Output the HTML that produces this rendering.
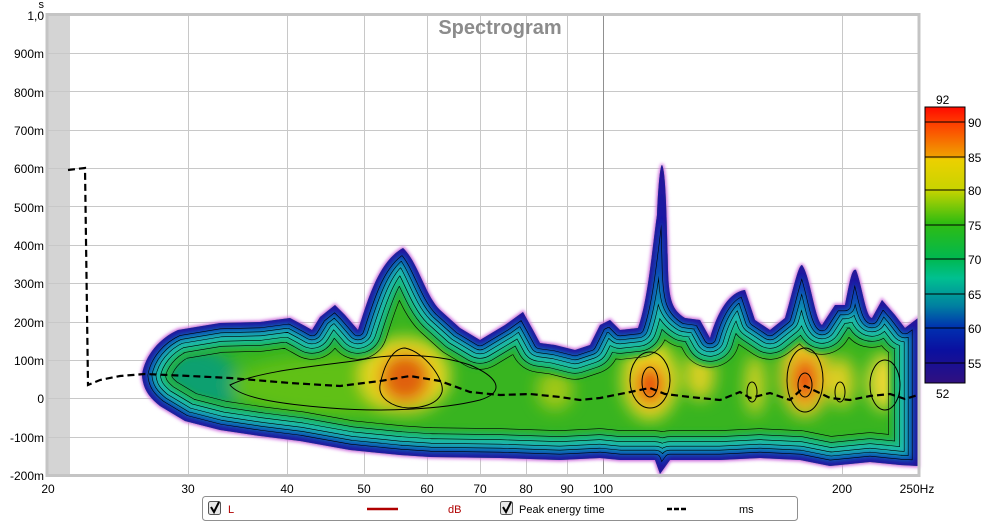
<!DOCTYPE html>
<html><head><meta charset="utf-8"><style>
body{margin:0;background:#fff;width:1000px;height:523px;overflow:hidden;font-family:"Liberation Sans",sans-serif}
</style></head><body>
<svg width="1000" height="523" viewBox="0 0 1000 523" xmlns="http://www.w3.org/2000/svg" font-family="Liberation Sans, sans-serif">
<defs>
<path id="blob" d="M142,375 C145,355 160,338 178,330 L220,323 L260,322 L290,318 L305,326 L312,330 L320,317 L335,305 L345,315 L358,330 C368,300 378,262 403,248 C418,262 425,295 440,310 L460,328 L480,340 L505,325 L523,312 L533,330 L540,343 L555,345 L575,350 L590,345 L600,325 L610,320 L620,330 L638,328 C648,300 652,250 657,215 C658,190 660,165 662,165 C666,170 667,230 668,270 C669,300 672,310 685,318 L700,320 L710,338 C718,310 730,292 745,290 L755,320 L770,330 L785,318 C792,295 798,265 802,265 C810,275 815,320 822,325 L835,305 L845,305 C850,280 852,268 856,270 C862,285 866,318 872,318 L882,300 L895,315 L905,328 L918,318 L918,466 L900,465 L870,462 L830,466 L800,460 L760,458 L720,460 L670,460 L660,474 L655,460 L620,460 L600,458 L560,460 L500,458 L430,457 L400,455 L350,450 L300,441 L260,436 L220,430 L185,421 L160,406 C150,398 143,390 142,375 Z"/>
<clipPath id="bc"><use href="#blob"/></clipPath>
<filter id="bl" x="-50%" y="-50%" width="200%" height="200%"><feGaussianBlur stdDeviation="8"/></filter>
<filter id="bb" x="-10%" y="-10%" width="120%" height="120%"><feGaussianBlur stdDeviation="3"/></filter>
<filter id="bl2" x="-50%" y="-50%" width="200%" height="200%"><feGaussianBlur stdDeviation="1.5"/></filter>
<mask id="cm" maskUnits="userSpaceOnUse" x="0" y="0" width="1000" height="523">
<g fill="none" stroke-linejoin="round">
<use href="#blob" stroke="#fff" stroke-width="59.2"/><use href="#blob" stroke="#000" stroke-width="58"/>
<use href="#blob" stroke="#fff" stroke-width="47.2"/><use href="#blob" stroke="#000" stroke-width="46"/>
<use href="#blob" stroke="#fff" stroke-width="37.2"/><use href="#blob" stroke="#000" stroke-width="36"/>
<use href="#blob" stroke="#fff" stroke-width="28.2"/><use href="#blob" stroke="#000" stroke-width="27"/>
<use href="#blob" stroke="#fff" stroke-width="20.2"/><use href="#blob" stroke="#000" stroke-width="19"/>
<use href="#blob" stroke="#fff" stroke-width="12.2"/><use href="#blob" stroke="#000" stroke-width="11"/>
</g>
</mask>
<linearGradient id="cb" x1="0" y1="0" x2="0" y2="1">
<stop offset="0" stop-color="#ff0a00"/><stop offset="0.055" stop-color="#ff3a00"/>
<stop offset="0.18" stop-color="#f0a000"/><stop offset="0.19" stop-color="#ecd000"/>
<stop offset="0.30" stop-color="#c8d400"/><stop offset="0.42" stop-color="#30bc10"/>
<stop offset="0.55" stop-color="#00b850"/><stop offset="0.62" stop-color="#00c090"/>
<stop offset="0.72" stop-color="#0080a0"/><stop offset="0.80" stop-color="#0030b0"/>
<stop offset="0.88" stop-color="#0a10a0"/><stop offset="1" stop-color="#301080"/>
</linearGradient>
</defs>
<rect x="48" y="16" width="22" height="459" fill="#d4d4d4"/>
<g stroke="#c8c8c8" stroke-width="1">
<line x1="48" x2="918" y1="53.5" y2="53.5"/><line x1="48" x2="918" y1="91.5" y2="91.5"/><line x1="48" x2="918" y1="130.5" y2="130.5"/><line x1="48" x2="918" y1="168.5" y2="168.5"/><line x1="48" x2="918" y1="206.5" y2="206.5"/><line x1="48" x2="918" y1="245.5" y2="245.5"/><line x1="48" x2="918" y1="283.5" y2="283.5"/><line x1="48" x2="918" y1="322.5" y2="322.5"/><line x1="48" x2="918" y1="360.5" y2="360.5"/><line x1="48" x2="918" y1="398.5" y2="398.5"/><line x1="48" x2="918" y1="437.5" y2="437.5"/>
<line x1="188.5" x2="188.5" y1="16" y2="475"/><line x1="287.5" x2="287.5" y1="16" y2="475"/><line x1="364.5" x2="364.5" y1="16" y2="475"/><line x1="427.5" x2="427.5" y1="16" y2="475"/><line x1="480.5" x2="480.5" y1="16" y2="475"/><line x1="526.5" x2="526.5" y1="16" y2="475"/><line x1="567.5" x2="567.5" y1="16" y2="475"/><line x1="842.5" x2="842.5" y1="16" y2="475"/>
</g>
<line x1="603.5" x2="603.5" y1="16" y2="475" stroke="#909090"/>
<use href="#blob" fill="#9030b0" stroke="#d070e0" stroke-width="3" filter="url(#bl2)"/>
<g clip-path="url(#bc)">
<rect x="130" y="150" width="800" height="330" fill="#38b420"/>
<g filter="url(#bl)">
<ellipse cx="190" cy="385" rx="50" ry="40" fill="#10a070"/>
<ellipse cx="340" cy="385" rx="110" ry="30" fill="#60c018"/>
<ellipse cx="405" cy="375" rx="45" ry="38" fill="#e8d820"/>
<ellipse cx="405" cy="378" rx="25" ry="25" fill="#e06010"/>
<ellipse cx="650" cy="380" rx="28" ry="40" fill="#e8d820"/>
<ellipse cx="650" cy="385" rx="14" ry="20" fill="#e84010"/>
<ellipse cx="700" cy="375" rx="15" ry="25" fill="#d8d020"/>
<ellipse cx="755" cy="385" rx="10" ry="30" fill="#d0d020"/>
<ellipse cx="805" cy="375" rx="25" ry="42" fill="#e8c820"/>
<ellipse cx="805" cy="380" rx="12" ry="22" fill="#e83010"/>
<ellipse cx="842" cy="382" rx="12" ry="25" fill="#e0d020"/>
<ellipse cx="885" cy="382" rx="18" ry="28" fill="#e8d830"/>
<ellipse cx="555" cy="390" rx="18" ry="20" fill="#a0c818"/>
</g>
<g fill="none" stroke-linejoin="round" filter="url(#bb)">
<use href="#blob" stroke="#28b038" stroke-width="57"/>
<use href="#blob" stroke="#18b880" stroke-width="45"/>
<use href="#blob" stroke="#20c0b0" stroke-width="35"/>
<use href="#blob" stroke="#1090b0" stroke-width="26"/>
<use href="#blob" stroke="#0850b8" stroke-width="18"/>
<use href="#blob" stroke="#0c18a8" stroke-width="10"/>
<use href="#blob" stroke="#301090" stroke-width="3"/>
</g>
<rect x="0" y="0" width="1000" height="523" fill="#000" mask="url(#cm)"/>
<g fill="none" stroke="#000" stroke-width="1">
<path d="M230,385 C260,370 330,365 360,360 C400,352 440,355 470,365 C500,378 505,392 480,400 C440,410 380,412 330,408 C280,404 240,398 230,385Z"/>
<path d="M380,385 C385,360 395,348 405,348 C425,352 445,380 442,392 C438,405 420,408 408,408 C392,407 378,398 380,385Z"/>
<ellipse cx="650" cy="380" rx="20" ry="28"/>
<ellipse cx="650" cy="382" rx="8" ry="15"/>
<ellipse cx="805" cy="380" rx="18" ry="32"/>
<ellipse cx="805" cy="385" rx="7" ry="12"/>
<ellipse cx="840" cy="392" rx="5" ry="10"/>
<ellipse cx="752" cy="392" rx="5" ry="10"/>
<ellipse cx="885" cy="385" rx="15" ry="25"/>
</g>
</g>
<path d="M68,170 L85,168 L88,385 L100,380 L120,376 L145,374 L190,376 L230,378 L290,383 L340,386 L380,381 L410,376 L440,381 L470,392 L500,395 L530,394 L560,397 L580,400 L600,398 L630,392 L650,388 L665,394 L690,397 L720,400 L740,392 L750,398 L770,393 L790,400 L805,386 L830,398 L850,400 L870,396 L890,394 L905,399 L918,395" fill="none" stroke="#000" stroke-width="2.2" stroke-dasharray="7,4"/>
<rect x="47" y="14.5" width="872" height="461" fill="none" stroke="#c4c4c4" stroke-width="3"/>
<text x="500" y="34" text-anchor="middle" font-size="20" font-weight="bold" fill="#8c8c8c">Spectrogram</text>
<g font-size="12" fill="#000" text-anchor="end">
<text x="44" y="8" font-size="11">s</text>
<text x="44" y="20">1,0</text><text x="44" y="58">900m</text><text x="44" y="97">800m</text><text x="44" y="135">700m</text><text x="44" y="173">600m</text><text x="44" y="212">500m</text><text x="44" y="250">400m</text><text x="44" y="288">300m</text><text x="44" y="327">200m</text><text x="44" y="365">100m</text><text x="44" y="403">0</text><text x="44" y="442">-100m</text><text x="44" y="480">-200m</text>
</g>
<g font-size="12" fill="#000" text-anchor="middle">
<text x="48" y="493">20</text><text x="188" y="493">30</text><text x="287" y="493">40</text><text x="364" y="493">50</text><text x="427" y="493">60</text><text x="480" y="493">70</text><text x="526" y="493">80</text><text x="567" y="493">90</text><text x="603" y="493">100</text><text x="842" y="493">200</text><text x="917" y="493">250Hz</text>
</g>
<rect x="925" y="107" width="40" height="276" fill="url(#cb)" stroke="#000" stroke-width="1"/>
<g stroke="#000" stroke-width="1">
<line x1="925" x2="965" y1="122" y2="122"/><line x1="925" x2="965" y1="157" y2="157"/><line x1="925" x2="965" y1="190" y2="190"/><line x1="925" x2="965" y1="225" y2="225"/><line x1="925" x2="965" y1="259" y2="259"/><line x1="925" x2="965" y1="294" y2="294"/><line x1="925" x2="965" y1="328" y2="328"/><line x1="925" x2="965" y1="363" y2="363"/>
</g>
<g font-size="12" fill="#000">
<text x="936" y="104">92</text><text x="936" y="398">52</text>
<text x="968" y="127">90</text><text x="968" y="162">85</text><text x="968" y="195">80</text><text x="968" y="230">75</text><text x="968" y="264">70</text><text x="968" y="299">65</text><text x="968" y="333">60</text><text x="968" y="368">55</text>
</g>
<rect x="202.5" y="496.5" width="595" height="24" rx="3" fill="#fff" stroke="#909090"/>
<rect x="208.5" y="501.5" width="12" height="13" rx="2" fill="#e8e8e8" stroke="#555"/>
<path d="M211,507 L214,512 L219,502" fill="none" stroke="#000" stroke-width="2"/>
<text x="228" y="513" font-size="11" fill="#b00000">L</text>
<line x1="367" x2="398" y1="509" y2="509" stroke="#b00000" stroke-width="2.5"/>
<text x="448" y="513" font-size="11" fill="#b00000">dB</text>
<rect x="500.5" y="501.5" width="12" height="13" rx="2" fill="#e8e8e8" stroke="#555"/>
<path d="M503,507 L506,512 L511,502" fill="none" stroke="#000" stroke-width="2"/>
<text x="519" y="513" font-size="11" fill="#000">Peak energy time</text>
<line x1="667" x2="686" y1="509" y2="509" stroke="#000" stroke-width="2.5" stroke-dasharray="5,2"/>
<text x="739" y="513" font-size="11" fill="#000">ms</text>
</svg>
</body></html>
